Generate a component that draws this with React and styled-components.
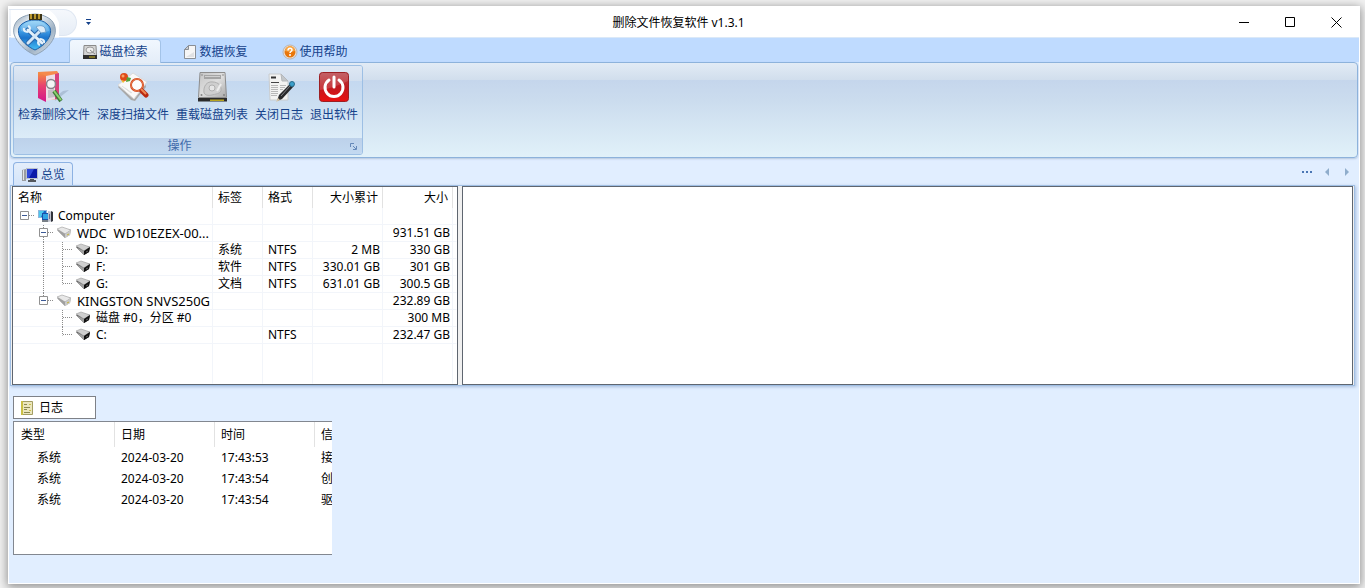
import React, { useState } from 'react'
import styled, { createGlobalStyle } from 'styled-components'

const GlobalStyle = createGlobalStyle`
    body{
        margin: 0;
        background-color: #f1f1f1;
        color: #000;
        font-family: "Noto Sans", "Noto Sans CJK SC", sans-serif;
        font-size: 12px;
        line-height: 16px;
    }
    button{
        margin: 0;
        padding: 0;
        border: none;
        background: none;
        color: inherit;
        font: inherit;
        cursor: pointer;
    }
    svg{
        display: block;
        flex: none;
    }
    `

const Desktop = styled.div`
    min-height: 100vh;
    box-sizing: border-box;
    padding: 6px 5px 4px 8px;
    display: flex;
    `

const Window = styled.div`
    position: relative;
    flex: 1;
    min-width: 0;
    border: 1px solid #fff;
    background-color: #e1eeff;
    box-shadow: 0 2px 9px 1px rgba(0, 0, 0, 0.4);
    `

const TitleBar = styled.header`
    height: 30px;
    display: flex;
    background-color: #fff;
    `

const QuickAccess = styled.div`
    width: 127px;
    display: flex;
    align-items: center;
    gap: 8px;
    `
const QuickShape = styled.div`
    width: 68px;
    height: 27px;
    box-sizing: border-box;
    border: 1px solid #dfe7f2;
    border-left: none;
    border-radius: 0 14px 14px 0;
    background: linear-gradient(#f5f8fc, #e6edf6);
    `
const QuickButton = styled.button`
    height: 16px;
    width: 8px;
    display: flex;
    align-items: center;
    `

const Title = styled.h1`
    flex: 1;
    margin: 0;
    padding-top: 1px;
    font-size: 12px;
    font-weight: 400;
    line-height: 30px;
    text-align: center;
    `

const WindowButton = styled.button`
    width: 46px;
    height: 30px;
    display: flex;
    justify-content: center;
    align-items: center;
    `

const AppButton = styled.button`
    position: absolute;
    top: 3px;
    left: 2px;
    `

const TabBar = styled.div`
    height: 25px;
    box-sizing: border-box;
    padding-left: 60px;
    border-top: 1px solid #dbe9f8;
    display: flex;
    align-items: flex-end;
    gap: 8px;
    background-color: #bfdbff;
    `
const Tab = styled.button`
    position: relative;
    z-index: 1;
    height: 24px;
    width: 92px;
    box-sizing: border-box;
    margin-bottom: -1px;
    border: 1px solid ${({ $active }) => ($active ? '#a3c3e8' : 'transparent')};
    border-bottom: none;
    border-radius: 4px 4px 0 0;
    background: ${({ $active }) => ($active ? 'linear-gradient(#f1f7fe, #e4edf8)' : 'none')};
    color: #15428b;
    display: flex;
    justify-content: center;
    align-items: center;
    gap: 1px;
    `

const Ribbon = styled.div`
    margin: 0 1px;
    padding: 2px;
    border: 1px solid #8db2db;
    border-radius: 4px;
    background: linear-gradient(#e2ebf5 0, #d1deed 17px, #c5d6ec 17px, #cbdcee 40%, #e1f1f9 100%);
    box-shadow: 0 1px 2px #b5c7de;
    display: flex;
    `
const Group = styled.section`
    border: 1px solid #9dbfe4;
    border-radius: 3px;
    overflow: hidden;
    `
const Actions = styled.div`
    padding: 5px 4px 15px;
    display: flex;
    gap: 7px;
    background: linear-gradient(#dfe8f4 0, #d2dfef 15px, #c4d8f0 15px, #cbdef1 50%, #dcecf8 100%);
    `
const Action = styled.button`
    color: #15428b;
    display: flex;
    flex-direction: column;
    align-items: center;
    gap: 4px;
    white-space: nowrap;
    `
const GroupFooter = styled.div`
    height: 16px;
    padding-right: 4px;
    display: flex;
    align-items: center;
    gap: 4px;
    background: linear-gradient(#bdd1ea, #c3d9f1);
    color: #3e6aaa;

    & h2{
        flex: 1;
        margin: 0;
        font-size: 12px;
        font-weight: 400;
        text-align: center;
    }
    `

const PageTabs = styled.div`
    padding: 4px 6px 0 4px;
    display: flex;
    justify-content: space-between;
    `
const PageTab = styled.button`
    height: 23px;
    box-sizing: border-box;
    padding: 1px 7px 0 8px;
    border: 1px solid #8db2e3;
    border-bottom: none;
    border-radius: 4px 4px 0 0;
    background: linear-gradient(#e4eefb, #d4e4f9);
    color: #15428b;
    display: flex;
    align-items: center;
    gap: 3px;
    `
const PageNav = styled.div`
    display: flex;
    align-items: center;
    gap: 7px;
    padding-bottom: 3px;

    & button{
        width: 13px;
        height: 14px;
        display: flex;
        justify-content: center;
        align-items: center;
    }
    `

const Workspace = styled.main`
    margin: 0 4px 0 1px;
    padding: 0 1px;
    border: 1px solid #a0bfe4;
    background-color: #f0f0f0;
    box-shadow: 1px 1px 3px #a9bedd;
    display: flex;
    gap: 4px;
    `
const Pane = styled.section`
    box-sizing: border-box;
    border: 1px solid #5f6670;
    background-color: #fff;
    flex: ${({ $width }) => ($width ? `0 0 ${$width}` : '1')};
    min-width: 0;
    `

const Table = styled.table`
    width: 100%;
    table-layout: fixed;
    border-spacing: 0;
    white-space: nowrap;
    `
const Col = styled.col`
    width: ${({ $width }) => $width};
    `
const HeadCell = styled.th`
    height: ${({ $height }) => $height || '21px'};
    box-sizing: border-box;
    padding: 0 4px 0 5px;
    border-right: 1px solid #e2e2e2;
    font-weight: 400;
    text-align: ${({ $right }) => ($right ? 'right' : 'left')};

    &:last-child{
        border-right: none;
        padding-right: 0;
    }
    `
const DiskCell = styled.td`
    height: ${({ $height }) => $height || '17px'};
    box-sizing: border-box;
    padding: 0 2px 0 5px;
    border-right: 1px solid #f2f5fa;
    border-bottom: 1px solid ${({ $height }) => ($height ? '#fff' : '#f2f5fa')};
    text-align: ${({ $right }) => ($right ? 'right' : 'left')};

    &:first-child{
        padding: 0 0 0 2px;
    }
    &:last-child{
        border-right-color: #fff;
        padding: 0;
    }
    `
const TreeItem = styled.div`
    height: 16px;
    display: flex;
    `
const NodeName = styled.span`
    margin-left: 4px;
    font-size: ${({ $device }) => ($device ? '13px' : '12px')};
    white-space: pre;
    `
const NodeIcon = styled.div`
    width: 16px;
    margin-left: 4px;
    `

const Log = styled.section`
    width: 319px;
    margin: 10px 4px 0;
    `
const LogTab = styled.button`
    width: 83px;
    height: 23px;
    box-sizing: border-box;
    padding-left: 5px;
    border: 1px solid #7e8187;
    background-color: #fff;
    display: flex;
    align-items: center;
    gap: 4px;
    `
const LogList = styled.div`
    margin-top: 2px;
    padding-bottom: 44px;
    border: 1px solid #828790;
    border-right: none;
    background-color: #fff;
    overflow: hidden;
    `
const LogCell = styled.td`
    height: 21px;
    padding: 0 0 0 ${({ $indent }) => ($indent ? '23px' : '6px')};
    overflow: hidden;
    `
const LogHead = styled(HeadCell)`
    padding: 0 0 0 6px;
    overflow: hidden;

    &:first-child{
        padding-left: 7px;
    }
    `

const OrbIcon = () => (
    <svg width="48" height="48" viewBox="0 0 48 48">
        <defs>
            <linearGradient id="orbRim" x1="0" y1="0" x2="1" y2="1">
                <stop offset="0" stopColor="#8299b0" />
                <stop offset="0.3" stopColor="#f4f8fb" />
                <stop offset="0.65" stopColor="#9fb2c4" />
                <stop offset="1" stopColor="#e6edf3" />
            </linearGradient>
            <linearGradient id="orbFace" x1="0" y1="0" x2="0" y2="1">
                <stop offset="0" stopColor="#8fd2f8" />
                <stop offset="0.4" stopColor="#3a97e2" />
                <stop offset="0.6" stopColor="#1c74cc" />
                <stop offset="1" stopColor="#45c0f5" />
            </linearGradient>
        </defs>
        <path d="M0 0h38a24 24 0 0 1 10 27.500H0z" fill="#fff" />
        <path d="M24 4c5 0 11 2 15 5 5 4 6 10 5 15-2 9-10 17-20 21C14 41 6 33 3 24 2 19 3 13 8 9c4-3 11-5 16-5z" fill="url(#orbRim)" stroke="#8ea2b6" />
        <path d="M24 10c5 0 9 1 12 4 4 3 4 7 3 11-2 6-8 12-15 15C17 37 10 31 8 25c-1-4-1-8 3-11 4-3 8-4 13-4z" fill="url(#orbFace)" stroke="#1d5fa8" />
        <path d="M24 11c5 0 8 1 11 4 2 2 3 4 3 6-9 3-19 3-28 0 0-2 0-4 2-6 3-3 7-4 12-4z" fill="#fff" opacity="0.200" />
        <path d="M18 4h13v6H18z" fill="#3e3514" />
        <path d="M19 4h2v5h-2zM23 4h2v5h-2zM27 4h2v5h-2z" fill="#b8962d" />
        <path d="M17 20l14 13M17 33l13-13" stroke="#2b69ac" strokeWidth="5" strokeLinecap="round" />
        <path d="M17 20l14 13" stroke="#e3f0fa" strokeWidth="3" strokeLinecap="round" />
        <path d="M17 33l13-13" stroke="#d3e6f6" strokeWidth="3" strokeLinecap="round" />
        <path d="M13 18a3 3 0 1 0 4-2M29 35a3 3 0 1 1 4-2" fill="none" stroke="#e3f0fa" strokeWidth="2" />
        <path d="M25 17c3-2 7-2 9 1l1 4-5 1z" fill="#dcebf8" stroke="#6da1ce" />
    </svg>
)

const DiskIcon = ({ size }) => (
    <svg width={size} height={size} viewBox="0 0 32 32">
        <defs>
            <linearGradient id="diskFace" x1="0" y1="0" x2="1" y2="1">
                <stop offset="0" stopColor="#c4c4c4" />
                <stop offset="0.5" stopColor="#dedede" />
                <stop offset="1" stopColor="#a9a9a9" />
            </linearGradient>
        </defs>
        <path d="M4 1.500h25l1.500 25h-28z" fill="url(#diskFace)" stroke="#8d8d8d" />
        <path d="M2 27h29v3.500H2z" fill="#2b2b2b" />
        <path d="M14 28.500h14v1.500H14z" fill="#b9a620" />
        <path d="M8 4h17v4H8z" fill="#a4a4a4" />
        <path d="M9 5.500h15" stroke="#d0d0d0" />
        <path d="M8 22c-1-7 3-12 9-11 5 0 9 4 8 9-1 3-6 3-9 4-4 1-7 0-8-2z" fill="#cfcfcf" stroke="#b0b0b0" />
        <circle cx="16" cy="17" r="3" fill="#e6e6e6" stroke="#b0b0b0" />
        <path d="M25 13l-4 7" stroke="#ececec" strokeWidth="2" />
        <circle cx="5.500" cy="24" r="1" fill="#858585" />
        <circle cx="28" cy="24" r="1" fill="#858585" />
        <circle cx="6" cy="4" r="0.800" fill="#858585" />
        <circle cx="27" cy="4" r="0.800" fill="#858585" />
    </svg>
)

const SmallDiskIcon = () => (
    <svg width="16" height="16" viewBox="0 0 16 16">
        <path d="M2 1.500h12l.5 10h-13z" fill="#d4d4d4" stroke="#8a8a8a" />
        <ellipse cx="8" cy="6" rx="4" ry="3" fill="#efefef" stroke="#9a9a9a" />
        <path d="M8 6l5 4" stroke="#8a8a8a" />
        <path d="M1 11h14v4H1z" fill="#2e2e2e" />
        <path d="M7 13h6" stroke="#c9b41f" />
    </svg>
)

const PageIcon = () => (
    <svg width="16" height="16" viewBox="0 0 16 16">
        <path d="M6.500 1.500h7v13h-11v-9z" fill="#f6f6f6" stroke="#8a8f96" />
        <path d="M6.500 1.500v4h-4z" fill="#c9ccd0" stroke="#8a8f96" />
        <path d="M4 13h8V8z" fill="#e0e1e3" />
    </svg>
)

const HelpIcon = () => (
    <svg width="16" height="16" viewBox="0 0 16 16">
        <circle cx="8" cy="8" r="7" fill="#e9e2dc" stroke="#bbb3ad" />
        <circle cx="8" cy="8" r="5.500" fill="#e8760b" />
        <path d="M3 7a5 5 0 0 1 10 0c-3 1-7 1-10 0z" fill="#f7a443" />
        <path d="M6 6.500c0-3 4-3 4-.500 0 1.500-2 1.500-2 3" fill="none" stroke="#fff" strokeWidth="1.500" />
        <circle cx="8" cy="11" r="1" fill="#fff" />
    </svg>
)

const FolderSearchIcon = () => (
    <svg width="32" height="32" viewBox="0 0 32 32">
        <defs>
            <linearGradient id="folderFace" x1="0" y1="0" x2="0" y2="1">
                <stop offset="0" stopColor="#f6923c" />
                <stop offset="0.45" stopColor="#e8436f" />
                <stop offset="1" stopColor="#d3148a" />
            </linearGradient>
        </defs>
        <path d="M17 30l14-11-6 1-8 6z" fill="#8a9db5" opacity="0.450" />
        <path d="M0 1l19-1 2 3v25l-11 1H8z" fill="#f58a4c" />
        <path d="M8 5l10-2v25l-10 2z" fill="#eddde6" />
        <path d="M0 1l8 4v26l-8-4z" fill="url(#folderFace)" />
        <path d="M17 3l4-1v26h-4z" fill="#d8407c" />
        <circle cx="13" cy="13" r="4.500" fill="#f4f4f6" stroke="#87838b" strokeWidth="1.500" />
        <path d="M10 19l6-1 1 8-7 1z" fill="#c3bfc6" />
        <path d="M16 20l7 10" stroke="#3c7a38" strokeWidth="4" />
        <path d="M16 20l7 9" stroke="#8ed16f" strokeWidth="2" />
    </svg>
)

const DeepScanIcon = () => (
    <svg width="32" height="32" viewBox="0 0 32 32">
        <path d="M1 16L14 4l14 8 1 4-11 14-4-1z" fill="#a8a8a8" />
        <path d="M1 14L16 2l14 9-13 17z" fill="#f9f9f9" stroke="#dadada" />
        <path d="M8 17l7 5M5 15l9 7" stroke="#dedede" />
        <circle cx="7" cy="6" r="4" fill="#df4a18" />
        <circle cx="6" cy="5" r="1.500" fill="#f8a264" />
        <path d="M10 6l4 1-1 3-4 1z" fill="#54a43b" />
        <path d="M4 9l4 1-2 2z" fill="#f2b632" />
        <circle cx="20" cy="14" r="6" fill="#fff" fillOpacity="0.700" stroke="#cf3d18" strokeWidth="2" />
        <circle cx="20" cy="14" r="6" fill="none" stroke="#f39a60" strokeWidth="0.700" />
        <path d="M25 20l4 4" stroke="#b92a12" strokeWidth="5" strokeLinecap="round" />
        <path d="M24 18l5 5" stroke="#f08854" strokeWidth="2" />
    </svg>
)

const CloseLogIcon = () => (
    <svg width="32" height="32" viewBox="0 0 32 32">
        <path d="M6 3h12l7 7v19H7z" fill="#f3f3f2" stroke="#c9ccce" />
        <path d="M18 3l1 7h6z" fill="#c4c7ca" stroke="#b4b7ba" />
        <path d="M8 6.500h5" stroke="#333" strokeWidth="2" />
        <path d="M8 11.500h8" stroke="#444" />
        <path d="M8 14.500h7M8 16.500h7M8 18.500h7M8 20.500h7M8 22.500h7M8 24.500h6M17 14.500h6M17 16.500h5M17 18.500h3" stroke="#b8b8b8" />
        <path d="M14 30l2-6L28 12l3 3-12 13z" fill="#29292b" />
        <path d="M18 25l9-10" stroke="#838488" />
        <circle cx="29" cy="13" r="2.500" fill="#3aa0cc" stroke="#2a6b8a" />
        <path d="M13 31l2-4 2 2z" fill="#d6c6a8" />
    </svg>
)

const PowerIcon = () => (
    <svg width="32" height="32" viewBox="0 0 32 32">
        <defs>
            <linearGradient id="powerFace" x1="0" y1="0" x2="0" y2="1">
                <stop offset="0" stopColor="#b8474c" />
                <stop offset="0.5" stopColor="#bf1a20" />
                <stop offset="1" stopColor="#ea1010" />
            </linearGradient>
        </defs>
        <rect x="1.500" y="1.500" width="29" height="29" rx="3" fill="url(#powerFace)" stroke="#9c2024" />
        <path d="M2 5q0-3 3-3h22q3 0 3 3v5Q16 17 2 19z" fill="#fff" opacity="0.150" />
        <path d="M11 9a9 9 0 1 0 10 0" fill="none" stroke="#fff" strokeWidth="3" strokeLinecap="round" />
        <path d="M16 6v10" stroke="#fff" strokeWidth="3" strokeLinecap="round" />
    </svg>
)

const ScreenIcon = () => (
    <svg width="16" height="16" viewBox="0 0 16 16">
        <path d="M0 3l4-1v12H0z" fill="#9a9da1" />
        <path d="M1.500 3v10" stroke="#e2e4e6" />
        <path d="M4 1h12v11H4z" fill="#b9c0cc" />
        <path d="M5 2h10v9H5z" fill="#0a1aa8" />
        <path d="M5 2h7l-5 9H5z" fill="#2f48d8" />
        <path d="M8 12h4v1h2v2H6v-2h2z" fill="#54585e" />
    </svg>
)

const ComputerIcon = () => (
    <svg width="16" height="16" viewBox="0 0 16 16">
        <path d="M0 2h9v8H0z" fill="#8fb6dc" />
        <path d="M1 3h7v6H1z" fill="#1268c8" />
        <path d="M1 3h5L3 9H1z" fill="#4ec8ee" />
        <path d="M4 5h7v7H4z" fill="#1d4fa8" />
        <path d="M5 6h5v5H5z" fill="#30a4e4" />
        <path d="M4 12h6v2H4z" fill="#798087" />
        <path d="M10 3l5 1v9l-5 1z" fill="#bfc3cf" />
        <path d="M13 3l2 1v9l-2 1z" fill="#32343c" />
        <path d="M11 6h1v5h-1z" fill="#6a6d96" />
    </svg>
)

const DriveIcon = ({ dark }) => (
    <svg width="16" height="16" viewBox="0 0 16 16">
        <path d="M0 5l5-2 9 2-1 5-5 3z" fill={dark ? '#3a3a3a' : '#a3a3a3'} />
        <path d="M0 4l5-2 9 3-6 4z" fill={dark ? '#cfcfcf' : '#e8e8e8'} stroke="#9b9b9b" strokeWidth="0.600" />
        <path d="M0 5l8 4v4z" fill="#a0a0a0" />
        <path d="M8 9l6-4-1 5-5 3z" fill={dark ? '#111' : '#c9c9c9'} />
        <path d="M10 10l2-1" stroke={dark ? '#666' : '#c5b433'} />
    </svg>
)

const LogIcon = () => (
    <svg width="16" height="16" viewBox="0 0 16 16">
        <path d="M2.500 1.500h11v13h-11z" fill="#ebe6bd" stroke="#a39d63" />
        <path d="M2 1h2v14H2z" fill="#cabf45" />
        <path d="M5 4.500h3M5 7.500h6M5 9.500h3M5 12.500h6" stroke="#8b8750" />
        <path d="M10 4.500h2M10 10.500h2" stroke="#cabf45" />
    </svg>
)

const LauncherIcon = () => (
    <svg width="9" height="9" viewBox="0 0 9 9" fill="none" stroke="#6588b8">
        <path d="M1.500 5V1.500H5M4 4l3 3M7.500 4v3.500H4" />
    </svg>
)

// one 19px step of the tree: dotted guides plus an optional collapse box
const TreeGuide = ({ kind }) => {
    const up = ['mid', 'last', 'tee', 'end', 'line'].includes(kind)
    const down = ['mid', 'tee', 'line'].includes(kind)
    const box = ['root', 'mid', 'last'].includes(kind)
    return (
        <svg width="19" height="17" viewBox="0 0 19 17" fill="none" stroke="#8c8c8c">
            {up && <path d="M9.500 0v8.500" strokeDasharray="1 1" />}
            {down && <path d="M9.500 8v9" strokeDasharray="1 1" />}
            {kind !== 'line' && kind !== 'none' && <path d="M10 7.500h9" strokeDasharray="1 1" />}
            {box && <path d="M5.500 3.500h8v8h-8z" fill="#fff" stroke="#919191" />}
            {box && <path d="M7 7.500h5" stroke="#3c5a96" />}
        </svg>
    )
}

const tabs = [
    { name: '磁盘检索', icon: <SmallDiskIcon /> },
    { name: '数据恢复', icon: <PageIcon /> },
    { name: '使用帮助', icon: <HelpIcon /> },
]

const actions = [
    { name: '检索删除文件', icon: <FolderSearchIcon /> },
    { name: '深度扫描文件', icon: <DeepScanIcon /> },
    { name: '重载磁盘列表', icon: <DiskIcon size={32} /> },
    { name: '关闭日志', icon: <CloseLogIcon /> },
    { name: '退出软件', icon: <PowerIcon /> },
]

const disks = [
    { guides: ['root'], icon: <ComputerIcon />, name: 'Computer' },
    { guides: ['none', 'mid'], icon: <DriveIcon />, name: 'WDC  WD10EZEX-00...', device: true, size: '931.51 GB' },
    { guides: ['none', 'line', 'tee'], icon: <DriveIcon dark />, name: 'D:', label: '系统', format: 'NTFS', total: '2 MB', size: '330 GB' },
    { guides: ['none', 'line', 'tee'], icon: <DriveIcon dark />, name: 'F:', label: '软件', format: 'NTFS', total: '330.01 GB', size: '301 GB' },
    { guides: ['none', 'line', 'end'], icon: <DriveIcon dark />, name: 'G:', label: '文档', format: 'NTFS', total: '631.01 GB', size: '300.5 GB' },
    { guides: ['none', 'last'], icon: <DriveIcon />, name: 'KINGSTON SNVS250G', device: true, size: '232.89 GB' },
    { guides: ['none', 'none', 'tee'], icon: <DriveIcon dark />, name: '磁盘 #0，分区 #0', size: '300 MB' },
    { guides: ['none', 'none', 'end'], icon: <DriveIcon dark />, name: 'C:', format: 'NTFS', size: '232.47 GB' },
]

const logs = [
    ['系统', '2024-03-20', '17:43:53', '接'],
    ['系统', '2024-03-20', '17:43:54', '创'],
    ['系统', '2024-03-20', '17:43:54', '驱'],
]

const DiskTable = () => (
    <Table>
        <colgroup>
            <Col $width="200px" />
            <Col $width="50px" />
            <Col $width="50px" />
            <Col $width="70px" />
            <Col $width="70px" />
            <Col />
        </colgroup>
        <thead>
            <tr>
                <HeadCell>名称</HeadCell>
                <HeadCell>标签</HeadCell>
                <HeadCell>格式</HeadCell>
                <HeadCell $right>大小累计</HeadCell>
                <HeadCell $right>大小</HeadCell>
                <HeadCell />
            </tr>
        </thead>
        <tbody>
            {disks.map((disk) => (
                <tr key={disk.name}>
                    <DiskCell>
                        <TreeItem>
                            {disk.guides.map((kind, i) => <TreeGuide key={i} kind={kind} />)}
                            <NodeIcon>{disk.icon}</NodeIcon>
                            <NodeName $device={disk.device}>{disk.name}</NodeName>
                        </TreeItem>
                    </DiskCell>
                    <DiskCell>{disk.label}</DiskCell>
                    <DiskCell>{disk.format}</DiskCell>
                    <DiskCell $right>{disk.total}</DiskCell>
                    <DiskCell $right>{disk.size}</DiskCell>
                    <DiskCell />
                </tr>
            ))}
            <tr>
                {[0, 1, 2, 3, 4, 5].map((i) => <DiskCell key={i} $height="40px" />)}
            </tr>
        </tbody>
    </Table>
)

const LogTable = () => (
    <Table>
        <colgroup>
            <Col $width="101px" />
            <Col $width="100px" />
            <Col $width="100px" />
            <Col />
        </colgroup>
        <thead>
            <tr>
                {['类型', '日期', '时间', '信'].map((name) => (
                    <LogHead key={name} $height="25px">{name}</LogHead>
                ))}
            </tr>
        </thead>
        <tbody>
            {logs.map((row, index) => (
                <tr key={index}>
                    {row.map((value, i) => <LogCell key={i} $indent={i === 0}>{value}</LogCell>)}
                </tr>
            ))}
        </tbody>
    </Table>
)

const App = () => {
    const [active, setActive] = useState(0)

    return (
        <Desktop>
            <GlobalStyle />
            <Window>
                <TitleBar>
                    <QuickAccess>
                        <QuickShape />
                        <QuickButton aria-label="menu">
                            <svg width="7" height="7" viewBox="0 0 7 7" fill="#15428b">
                                <path d="M1 0h5v1H1zM1 3h5L3.500 6z" />
                            </svg>
                        </QuickButton>
                    </QuickAccess>
                    <Title>删除文件恢复软件 v1.3.1</Title>
                    <WindowButton aria-label="minimize">
                        <svg width="11" height="11" viewBox="0 0 11 11" stroke="#000"><path d="M0 5.500h10" /></svg>
                    </WindowButton>
                    <WindowButton aria-label="maximize">
                        <svg width="11" height="11" viewBox="0 0 11 11" stroke="#000" fill="none"><path d="M.5.5h9v9h-9z" /></svg>
                    </WindowButton>
                    <WindowButton aria-label="close">
                        <svg width="11" height="11" viewBox="0 0 11 11" stroke="#000"><path d="M.5.5l10 10M10.500.5l-10 10" /></svg>
                    </WindowButton>
                </TitleBar>
                <TabBar role="tablist">
                    {tabs.map((tab, index) => (
                        <Tab
                            key={tab.name}
                            role="tab"
                            aria-selected={active === index}
                            $active={active === index}
                            onClick={() => setActive(index)}
                        >
                            {tab.icon}
                            {tab.name}
                        </Tab>
                    ))}
                </TabBar>
                <AppButton aria-label="app"><OrbIcon /></AppButton>
                <Ribbon>
                    <Group>
                        <Actions>
                            {actions.map((action) => (
                                <Action key={action.name}>
                                    {action.icon}
                                    {action.name}
                                </Action>
                            ))}
                        </Actions>
                        <GroupFooter>
                            <h2>操作</h2>
                            <button aria-label="more"><LauncherIcon /></button>
                        </GroupFooter>
                    </Group>
                </Ribbon>
                <PageTabs>
                    <PageTab><ScreenIcon />总览</PageTab>
                    <PageNav>
                        <button aria-label="list">
                            <svg width="10" height="2" viewBox="0 0 10 2" fill="#4a76b4"><path d="M0 0h2v2H0zM4 0h2v2H4zM8 0h2v2H8z" /></svg>
                        </button>
                        <button aria-label="previous">
                            <svg width="4" height="8" viewBox="0 0 4 8" fill="#8fadcc"><path d="M4 0v8L0 4z" /></svg>
                        </button>
                        <button aria-label="next">
                            <svg width="4" height="8" viewBox="0 0 4 8" fill="#8fadcc"><path d="M0 0v8l4-4z" /></svg>
                        </button>
                    </PageNav>
                </PageTabs>
                <Workspace>
                    <Pane $width="446px"><DiskTable /></Pane>
                    <Pane />
                </Workspace>
                <Log>
                    <LogTab><LogIcon />日志</LogTab>
                    <LogList><LogTable /></LogList>
                </Log>
            </Window>
        </Desktop>
    )
}

export default App
